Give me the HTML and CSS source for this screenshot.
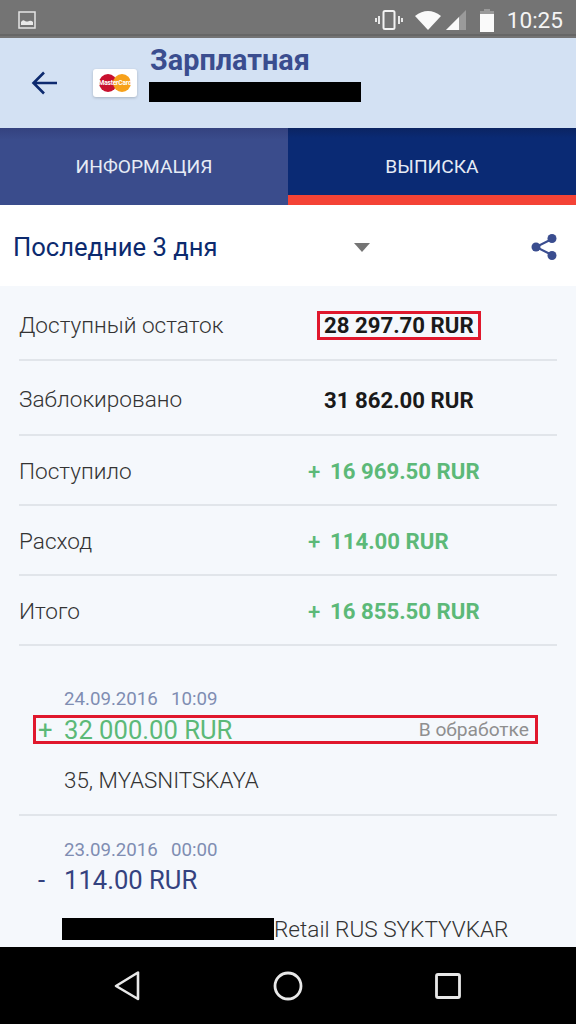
FILE: index.html
```html
<!DOCTYPE html>
<html lang="ru">
<head>
    <meta charset="UTF-8">
    <meta name="viewport" content="width=device-width, initial-scale=1.0">
    <title>Зарплатная</title>
    <link rel="stylesheet" href="styles.css">
</head>
<body>
    <div class="phone">
        <div class="status-bar">
            <svg class="status-pic" width="18" height="18" viewBox="0 0 18 18">
                <rect x="1" y="1" width="16" height="16" fill="none" stroke="#e4e4e4" stroke-width="1.5"/>
                <path d="M3 14 L3 11 Q5 8 7 10 Q9 11 11 10 Q13 9 15 11 L15 14 Z" fill="#e8e8e8"/>
            </svg>
            <div class="status-right">
                <svg width="28" height="22" viewBox="0 0 28 22">
                    <rect x="8.5" y="2" width="11" height="18" rx="1.5" fill="none" stroke="#f2f2f2" stroke-width="2"/>
                    <path d="M4 7v8M1 9v4M24 7v8M27 9v4" stroke="#e8e8e8" stroke-width="2"/>
                </svg>
                <svg class="status-wifi" width="28" height="22" viewBox="0 0 26 22">
                    <path d="M0 7 Q13 -3 26 7 L13 21 Z" fill="#fafafa"/>
                </svg>
                <svg class="status-signal" width="22" height="22" viewBox="0 0 20 22">
                    <path d="M0 21 L20 1 L20 21 Z" fill="#9a9a9a"/>
                    <path d="M0 21 L13 8 L13 21 Z" fill="#fafafa"/>
                </svg>
                <svg class="status-battery" width="14" height="24" viewBox="0 0 14 24">
                    <path d="M4 1h6v2h4v21H0V3h4z" fill="#9a9a9a"/>
                    <path d="M0 6h14v18H0z" fill="#fafafa"/>
                </svg>
                <span class="status-time">10:25</span>
            </div>
        </div>

        <header class="app-bar">
            <svg class="back-icon" width="28" height="26" viewBox="0 0 28 26">
                <path d="M26 13H3M13 2.5 2.5 13 13 23.500" fill="none" stroke="#0d2a6f" stroke-width="2.600"/>
            </svg>
            <div class="card-logo">
                <svg width="34" height="18" viewBox="0 0 34 18">
                    <circle cx="10" cy="9" r="9" fill="#c8102e"/>
                    <circle cx="24" cy="9" r="9" fill="#f7a11a"/>
                </svg>
                <span class="card-logo-text">MasterCard</span>
            </div>
            <div class="app-title">
                <div class="account-name">Зарплатная</div>
                <div class="redacted account-number"></div>
            </div>
        </header>

        <nav class="tabs">
            <div class="tab">ИНФОРМАЦИЯ</div>
            <div class="tab active">ВЫПИСКА</div>
        </nav>

        <div class="filter">
            <span class="filter-label">Последние 3 дня</span>
            <span class="filter-arrow"></span>
            <svg class="share-icon" width="28" height="28" viewBox="0 0 28 28">
                <path d="M22 6 6 14l16 8" fill="none" stroke="#3a4d8f" stroke-width="2"/>
                <circle cx="22" cy="5.500" r="4.500" fill="#3a4d8f"/>
                <circle cx="6" cy="14" r="4.500" fill="#3a4d8f"/>
                <circle cx="22" cy="22.500" r="4.500" fill="#3a4d8f"/>
            </svg>
        </div>

        <main class="content">
            <div class="summary">
                <div class="row row-first">
                    <span class="row-label">Доступный остаток</span>
                    <span class="row-value"><span class="amount marked">28 297.70 RUR</span></span>
                </div>
                <div class="row row-second">
                    <span class="row-label">Заблокировано</span>
                    <span class="row-value"><span class="amount">31 862.00 RUR</span></span>
                </div>
                <div class="row">
                    <span class="row-label">Поступило</span>
                    <span class="row-value green"><span class="sign">+</span>16 969.50 RUR</span>
                </div>
                <div class="row">
                    <span class="row-label">Расход</span>
                    <span class="row-value green"><span class="sign">+</span>114.00 RUR</span>
                </div>
                <div class="row">
                    <span class="row-label">Итого</span>
                    <span class="row-value green"><span class="sign">+</span>16 855.50 RUR</span>
                </div>
            </div>

            <div class="operation">
                <div class="op-date"><span>24.09.2016</span><span>10:09</span></div>
                <div class="op-amount pending">
                    <span class="op-sign">+</span>
                    <span class="op-sum">32 000.00 RUR</span>
                    <span class="op-state">В обработке</span>
                </div>
                <div class="op-place">35, MYASNITSKAYA</div>
            </div>

            <div class="operation op-last">
                <div class="op-date"><span>23.09.2016</span><span>00:00</span></div>
                <div class="op-amount expense">
                    <span class="op-sign">-</span>
                    <span class="op-sum">114.00 RUR</span>
                </div>
                <div class="op-place op-place-cut"><span class="redacted place-bar"></span>Retail RUS SYKTYVKAR</div>
            </div>
        </main>

        <footer class="nav-bar">
            <svg width="30" height="32" viewBox="0 0 30 32">
                <path d="M25 2.500V29L3 16Z" fill="none" stroke="#e8e8e8" stroke-width="2.600" stroke-linejoin="round"/>
            </svg>
            <svg width="30" height="30" viewBox="0 0 30 30">
                <circle cx="15" cy="15" r="13" fill="none" stroke="#e8e8e8" stroke-width="2.800"/>
            </svg>
            <svg width="26" height="26" viewBox="0 0 26 26">
                <rect x="1.500" y="1.500" width="23" height="23" rx="1.500" fill="none" stroke="#e8e8e8" stroke-width="2.800"/>
            </svg>
        </footer>
    </div>
</body>
</html>
```

FILE: styles.css
```css
* {
    margin: 0;
    padding: 0;
    box-sizing: border-box;
    font-family: Roboto, 'Liberation Sans', sans-serif;
}

body {
    width: 576px;
    height: 1024px;
    overflow: hidden;
    background-color: #f5f8fc;
}

.phone {
    height: 1024px;
    display: flex;
    flex-direction: column;
}

.status-bar {
    height: 38px;
    flex-shrink: 0;
    display: flex;
    align-items: center;
    justify-content: space-between;
    padding: 2px 13px 0 18px;
    background: linear-gradient(#747474 34px, #666 34px, #666 36px, #747474 36px);
}

.status-right {
    display: flex;
    align-items: center;
}

.status-wifi {
    margin-left: 11px;
}

.status-signal {
    margin-left: 3px;
}

.status-battery {
    margin-left: 13px;
}

.status-time {
    margin-left: 13px;
    color: #f4f4f4;
    font-size: 22.6px;
}

.app-bar {
    height: 90px;
    flex-shrink: 0;
    display: flex;
    align-items: flex-start;
    background-color: #d3e1f3;
}

.back-icon {
    margin: 32px 0 0 31px;
}

.card-logo {
    position: relative;
    width: 44px;
    height: 28px;
    margin: 31px 0 0 34px;
    display: flex;
    align-items: center;
    justify-content: center;
    background-color: #fff;
    border-radius: 3px;
    box-shadow: 0 1px 3px rgba(0, 0, 0, 0.2);
}

.card-logo-text {
    position: absolute;
    top: 10px;
    left: 5px;
    width: 34px;
    text-align: center;
    color: #fff;
    font-size: 6.6px;
    line-height: 8px;
    font-weight: 700;
    letter-spacing: -0.2px;
    white-space: nowrap;
}

.app-title {
    margin: 5px 0 0 13px;
}

.account-name {
    color: #3a4d8f;
    font-size: 28.8px;
    font-weight: 700;
    line-height: 34px;
}

.redacted {
    display: block;
    background-color: #000;
}

.account-number {
    width: 212px;
    height: 20px;
    margin: 5px 0 0 -1px;
}

.tabs {
    height: 77px;
    flex-shrink: 0;
    display: grid;
    grid-template-columns: 1fr 1fr;
}

.tab {
    display: flex;
    align-items: center;
    justify-content: center;
    padding-bottom: 1px;
    background: linear-gradient(#34427f, #3a4c8c 15%);
    color: #e6ebf5;
    font-size: 19.2px;
}

.tab.active {
    background: linear-gradient(#0b2462, #0a2a74 15%);
    border-bottom: 10px solid #f44336;
    padding-bottom: 0;
    padding-top: 9px;
}

.filter {
    position: relative;
    height: 81px;
    flex-shrink: 0;
    display: flex;
    align-items: center;
    padding: 0 18px 0 13px;
    background-color: #fff;
}

.filter-label {
    color: #0c2a6e;
    font-size: 25.6px;
    padding-top: 2px;
}

.filter-arrow {
    position: absolute;
    left: 354px;
    top: 38px;
    border-top: 9px solid #757575;
    border-left: 8px solid transparent;
    border-right: 8px solid transparent;
}

.share-icon {
    position: absolute;
    right: 18px;
    top: 28px;
}

.content {
    flex: 1;
    min-height: 0;
    overflow: hidden;
    padding: 5px 19px 0 19px;
    background-color: #f5f8fc;
}

.row {
    display: flex;
    align-items: center;
    height: 70px;
    padding-top: 2px;
    border-bottom: 2px solid #e1e5ea;
}

.row-first {
    padding-top: 0;
}

.row-second {
    height: 75px;
    padding-top: 4px;
}

.row-label {
    width: 289px;
    color: #333;
    font-size: 22.6px;
    font-weight: 300;
}

.row-value {
    color: #1a1a1a;
    font-size: 22.2px;
    font-weight: 700;
    white-space: nowrap;
}

.row-value.green {
    color: #5cb978;
}

.amount {
    display: inline-block;
    margin-left: 16px;
}

.amount.marked {
    margin-left: 9px;
    padding: 0 4px;
    line-height: 23px;
    border: 3px solid #e0182d;
}

.sign {
    display: inline-block;
    width: 22px;
    font-weight: 500;
}

.operation {
    padding: 0 0 20px 45px;
    border-bottom: 2px solid #e1e5ea;
}

.summary + .operation {
    margin-top: 41px;
}

.op-last {
    margin-top: 22px;
    border-bottom: none;
}

.op-date {
    display: flex;
    gap: 13px;
    color: #7f8db2;
    font-size: 18.7px;
    line-height: 24px;
}

.op-amount {
    display: flex;
    align-items: center;
    height: 29px;
    margin: 4px 0 0 -31px;
    padding: 0 6px 0 2px;
    width: 505px;
    font-size: 25.6px;
}

.op-amount.pending {
    color: #5cb978;
    border: 3px solid #e0182d;
}

.op-amount.expense {
    margin-top: 3px;
    color: #34427f;
    border: 3px solid transparent;
}

.op-sign {
    width: 26px;
}

.op-sum {
    flex: 1;
}

.op-state {
    color: #8f8f8f;
    font-size: 19.2px;
}

.op-place {
    margin-top: 22px;
    color: #333;
    font-size: 22.4px;
    font-weight: 300;
    line-height: 28px;
    white-space: nowrap;
}

.op-place-cut {
    display: flex;
    margin: 22px 0 0 -2px;
    font-size: 22.6px;
}

.place-bar {
    width: 212px;
    height: 22px;
    margin-top: 2px;
}

.nav-bar {
    height: 77px;
    flex-shrink: 0;
    display: grid;
    grid-template-columns: repeat(3, 160px);
    justify-content: center;
    justify-items: center;
    align-items: center;
    background-color: #000;
}
```
